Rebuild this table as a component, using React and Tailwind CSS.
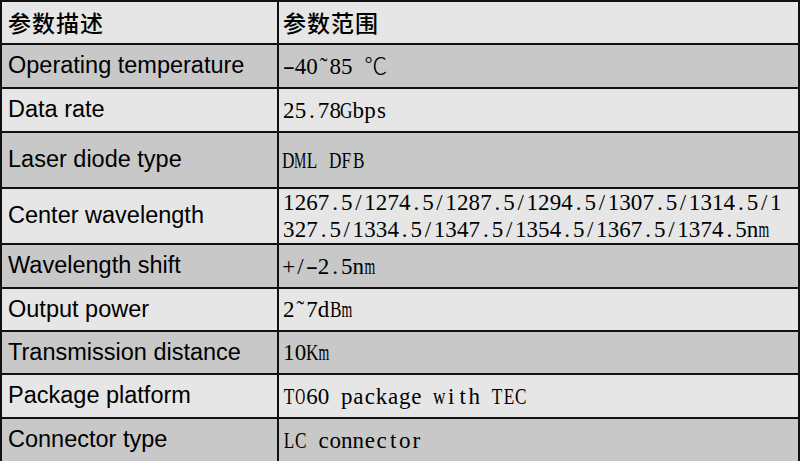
import React from "react";

const rows = [
  { label: "Operating temperature", value: ["-40˜85 ℃"], h: "h-[44px]", dark: true },
  { label: "Data rate", value: ["25.78Gbps"], h: "h-[44px]", dark: false },
  { label: "Laser diode type", value: ["DML DFB"], h: "h-[56px]", dark: true },
  {
    label: "Center wavelength",
    value: [
      "1267.5/1274.5/1287.5/1294.5/1307.5/1314.5/1",
      "327.5/1334.5/1347.5/1354.5/1367.5/1374.5nm",
    ],
    h: "h-[56px]",
    dark: false,
  },
  { label: "Wavelength shift", value: ["+/-2.5nm"], h: "h-[44px]", dark: true },
  { label: "Output power", value: ["2˜7dBm"], h: "h-[43px]", dark: false },
  { label: "Transmission distance", value: ["10Km"], h: "h-[43px]", dark: true },
  { label: "Package platform", value: ["TO60 package with TEC"], h: "h-[44px]", dark: false },
  { label: "Connector type", value: ["LC connector"], h: "h-[44px]", dark: true },
];

const extraWide = "MmWO";
const wide = "ABCDEFGHKLNPRTUVXYZw";

// fixed-pitch serif text, like the half-width latin of a song-style font
const Mono = ({ text }) => (
  <span className="inline-flex">
    {Array.from(text).map((ch, i) => (
      <span
        key={i}
        className={`flex justify-center ${ch === "℃" ? "w-[23.2px]" : "w-[11.6px]"}`}
      >
        <span
          className={`inline-block ${
            extraWide.includes(ch)
              ? "scale-x-[0.6]"
              : wide.includes(ch)
                ? "scale-x-[0.75]"
                : ch === "-"
                  ? "scale-x-[1.6]"
                  : ch === "℃"
                    ? "font-['Liberation_Serif','Noto_Sans_CJK_SC',serif] font-light"
                    : ""
          }`}
        >
          {ch === " " ? "\u00a0" : ch}
        </span>
      </span>
    ))}
  </span>
);

export default function App() {
  return (
    <div className="w-[800px] h-[461px] bg-white">
      <table className="w-full h-[461px] border-collapse border-2 border-[#111] text-black">
        <tbody>
          <tr className="h-[43px] bg-[#e6e6e6]">
            <td className="w-[277px] border-2 border-[#111] p-0 pl-[6px] font-['Noto_Sans_CJK_SC',sans-serif] text-[23px] leading-none font-medium tracking-[1px]">
              参数描述
            </td>
            <td className="border-2 border-[#111] p-0 pl-[4px] font-['Noto_Sans_CJK_SC',sans-serif] text-[23px] leading-none font-medium tracking-[1px]">
              参数范围
            </td>
          </tr>
          {rows.map((r) => (
            <tr key={r.label} className={`${r.h} ${r.dark ? "bg-[#c8c8c8]" : "bg-[#e6e6e6]"}`}>
              <td className="border-2 border-[#111] p-0 pl-[6px] font-['Liberation_Sans',Arial,sans-serif] text-[23.5px] leading-none">
                {r.label}
              </td>
              <td className="border-2 border-[#111] p-0 pl-[4px] font-['Liberation_Serif',serif] text-[23px] leading-[27px]">
                {r.value.map((v) => (
                  <div key={v}>
                    <Mono text={v} />
                  </div>
                ))}
              </td>
            </tr>
          ))}
        </tbody>
      </table>
    </div>
  );
}
